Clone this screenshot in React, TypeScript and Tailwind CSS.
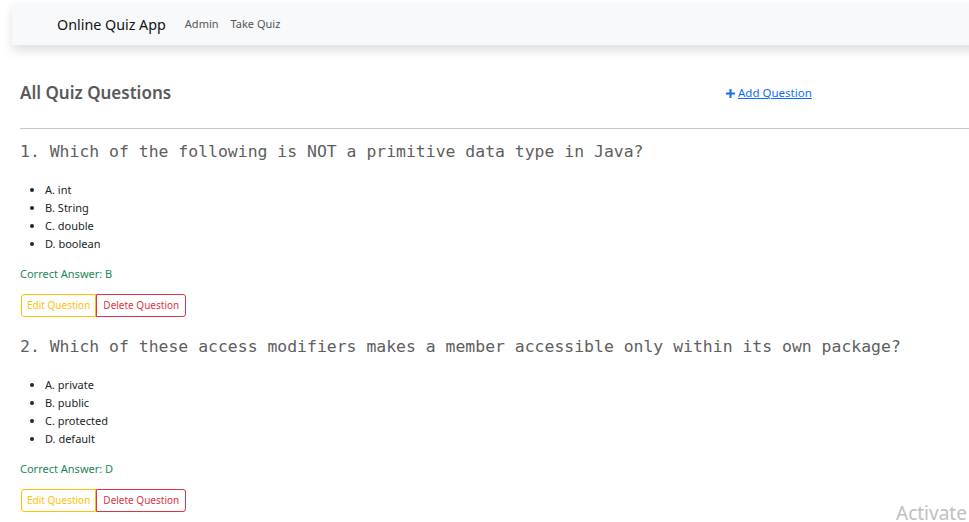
import React from "react";

const questions = [
  {
    text: "Which of the following is NOT a primitive data type in Java?",
    options: ["A. int", "B. String", "C. double", "D. boolean"],
    answer: "B",
  },
  {
    text: "Which of these access modifiers makes a member accessible only within its own package?",
    options: ["A. private", "B. public", "C. protected", "D. default"],
    answer: "D",
  },
];

export default function App() {
  return (
    <div className="relative min-h-screen overflow-hidden bg-white font-['Noto_Sans',sans-serif]">
      <nav className="ml-3 mt-[3px] flex h-[42px] w-[calc(100%+20px)] items-center bg-[#f8f9fa] pl-[45px] pt-[1px] shadow-[0_6px_10px_rgba(0,0,0,0.12)]">
        <span className="text-[14.3px] text-[#111]">Online Quiz App</span>
        <span className="ml-[19px] text-[11px] text-[#555]">Admin</span>
        <span className="ml-[12px] text-[11px] text-[#555]">Take Quiz</span>
      </nav>

      <div className="pl-5">
        <div className="mt-[35px] flex items-center">
          <h2 className="w-[705px] text-[17px] font-semibold leading-[26px] text-[#5a5a5a]">All Quiz Questions</h2>
          <a className="flex items-center text-[11.5px] text-[#0d6efd] underline">
            <svg width="11" height="11" viewBox="0 0 12 12" className="mr-[2px]">
              <path d="M6 1v10M1 6h10" stroke="#0d6efd" strokeWidth="2.2" />
            </svg>
            Add Question
          </a>
        </div>
        <div className="mt-[22px] h-px w-[calc(100%+20px)] bg-[#c8c8c8]" />

        {questions.map((q, i) => (
          <div key={i} className={i === 0 ? "mt-[11px]" : "mt-[18px]"}>
            <p className="font-['DejaVu_Sans_Mono',monospace] text-[16.45px] leading-[24px] text-[#5e5e5e]">
              {i + 1}. {q.text}
            </p>
            <ul className="mt-[17px] list-disc pl-[25px] text-[11px] leading-[18px] text-[#212529]">
              {q.options.map((o) => (
                <li key={o}>{o}</li>
              ))}
            </ul>
            <p className="mt-[12px] text-[11px] leading-[18px] text-[#198754]">Correct Answer: {q.answer}</p>
            <div className="mt-[11px] flex h-[23px] pl-px text-[10px]">
              <button className="rounded-l-[3px] border border-[#ffc107] px-[5px] text-[#ffc107]">Edit Question</button>
              <button className="rounded-r-[3px] border border-[#dc3545] px-[6px] text-[#dc3545]">Delete Question</button>
            </div>
          </div>
        ))}
      </div>

      <span className="absolute left-[896px] top-[505px] text-[19px] leading-[17px] text-[#c0c0c0]">Activate</span>
    </div>
  );
}
